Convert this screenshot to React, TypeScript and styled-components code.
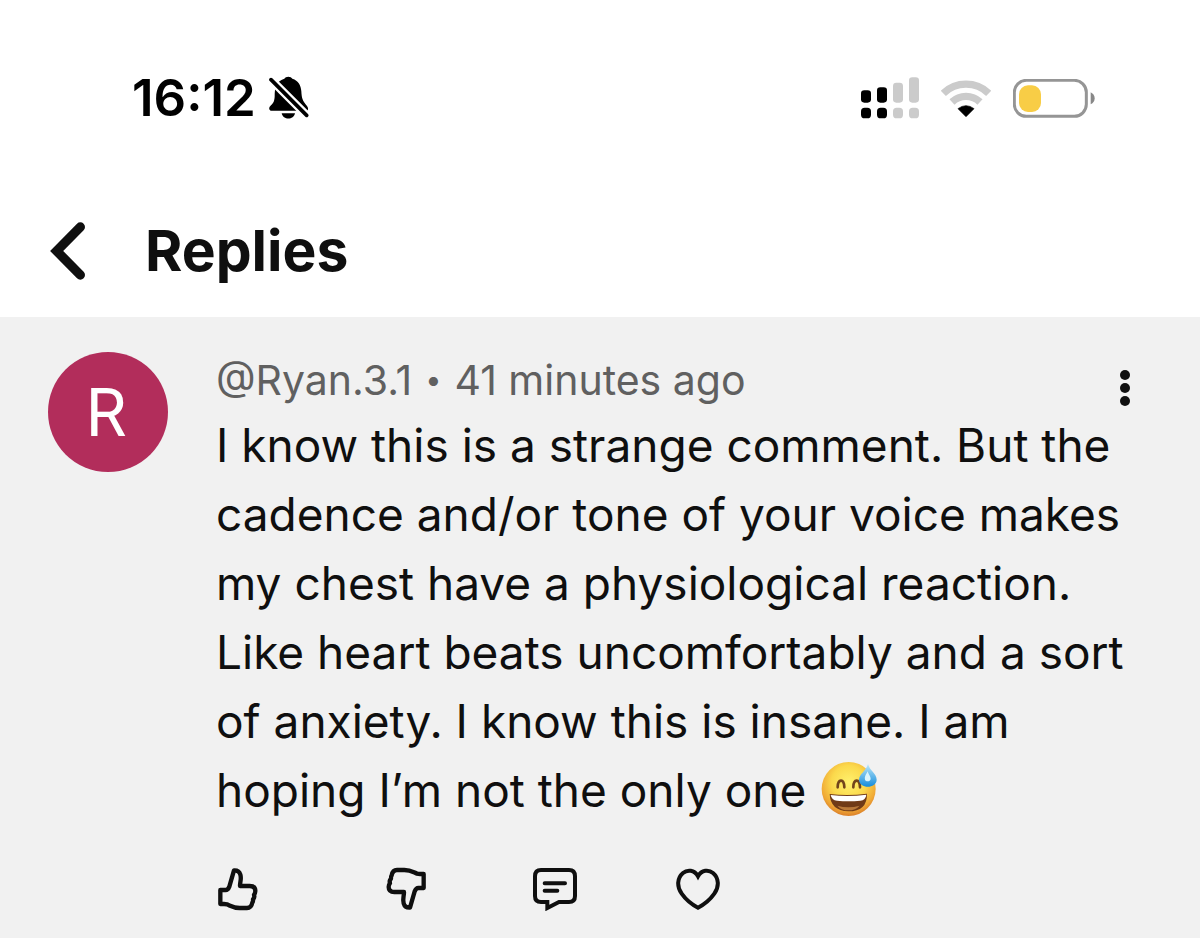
import React from "react";
import styled, { createGlobalStyle } from "styled-components";

const GlobalStyle = createGlobalStyle`
  *, *::before, *::after { box-sizing: border-box; }
  html { background: #f1f1f1; }
  body {
    margin: 0;
    background: #f1f1f1;
    color: #0f0f0f;
    font-family: Inter, "Liberation Sans", sans-serif;
  }
  svg { display: block; flex: none; }
`;

const Page = styled.div`
  display: flex;
  flex-direction: column;
  min-height: 100vh;
`;

const StatusBar = styled.div`
  display: flex;
  align-items: center;
  justify-content: space-between;
  padding: 68px 105px 0 132px;
  background: #fff;
  color: #000;
`;

const StatusGroup = styled.div<{ $gap: number }>`
  display: flex;
  align-items: center;
  gap: ${(p) => p.$gap}px;
`;

const Clock = styled.time`
  font-size: 51px;
  line-height: 60px;
  font-weight: 600;
`;

const Header = styled.header`
  display: flex;
  align-items: center;
  gap: 59px;
  padding: 87px 48px 30px 50px;
  background: #fff;
`;

const Title = styled.h1`
  margin: 0;
  font-size: 57px;
  line-height: 72px;
  font-weight: 700;
`;

const IconButton = styled.button`
  display: flex;
  align-items: center;
  justify-content: center;
  padding: 0;
  border: 0;
  background: none;
  color: inherit;
  cursor: pointer;
`;

const Comment = styled.article`
  display: flex;
  align-items: flex-start;
  gap: 48px;
  padding: 35px 69px 24px 48px;
`;

const Avatar = styled.div`
  display: flex;
  align-items: center;
  justify-content: center;
  flex: none;
  width: 120px;
  height: 120px;
  padding: 4px 4px 0 0;
  border-radius: 50%;
  background: #b22d5b;
  color: #fff;
  font: 400 66px/72px Roboto, sans-serif;
`;

const Body = styled.div`
  flex: 1;
  min-width: 0;
`;

const MetaRow = styled.div`
  display: flex;
  align-items: flex-end;
  justify-content: space-between;
  height: 59px;
  padding-bottom: 4px;
`;

const Meta = styled.div`
  display: flex;
  align-items: center;
  gap: 13px;
  color: #606060;
  font-size: 41px;
  line-height: 54px;
`;

const Bullet = styled.span`
  font-size: 29px;
`;

const Text = styled.p`
  margin: 0;
  font-size: 46px;
  line-height: 69px;

  svg {
    display: inline-block;
    vertical-align: -10px;
    margin-left: 2px;
  }
`;

const Actions = styled.div`
  display: flex;
  align-items: center;
  margin-top: 42px;
  padding-left: 1px;
`;

const Action = styled(IconButton)<{ $space?: number }>`
  width: 44px;
  height: 44px;
  margin-right: ${(p) => p.$space ?? 0}px;
`;

const BellOff = () => (
  <svg width="40" height="44" viewBox="0 0 120 132" aria-label="Silent mode">
    <path d="M46 8C50 0 66 0 70 8C88 14 96 28 97 46C98 66 100 74 114 90Q120 98 115 104H5Q-2 100 2 92C12 82 16 78 17 62C17 34 20 16 46 8Z" />
    <path d="M38 112H78C74 133 42 133 38 112Z" />
    <path d="M0 5L118 123" stroke="#fff" strokeWidth="25" />
    <path d="M6 11L113 118" stroke="#000" strokeWidth="11" strokeLinecap="round" />
  </svg>
);

const bars = [
  { x: 0, y: 40, fill: "#000" },
  { x: 48, y: 31, fill: "#000" },
  { x: 96, y: 17, fill: "#cbcbcb" },
  { x: 144, y: 1, fill: "#cbcbcb" },
];

const Signal = () => (
  <svg width="58" height="42" viewBox="0 0 174 126" aria-label="Signal">
    {bars.map((b) => (
      <g key={b.x} fill={b.fill}>
        <rect x={b.x} y={b.y} width="30" height={77 - b.y} rx="10" />
        <rect x={b.x} y="92" width="30" height="32" rx="11" />
      </g>
    ))}
  </svg>
);

const Wifi = () => (
  <svg width="50" height="37" viewBox="0 0 150 111" fill="none" aria-label="Wi-Fi">
    <g stroke="#cbcbcb" strokeWidth="22">
      <path d="M7 40A98 98 0 0 1 143 40" />
      <path d="M33 66A61 61 0 0 1 117 66" />
    </g>
    <path d="M75 110L51 86Q75 68 99 86Z" fill="#000" stroke="#000" strokeWidth="2" strokeLinejoin="round" />
  </svg>
);

const Battery = () => (
  <svg width="82" height="39" viewBox="0 0 246 117" aria-label="Battery">
    <rect x="4" y="4" width="216" height="108" rx="36" fill="none" stroke="#959595" strokeWidth="9" />
    <rect x="18" y="19" width="66" height="80" rx="27" fill="#f8cd46" />
    <path d="M233 40Q245 46 245 58T233 76Z" fill="#888" />
  </svg>
);

const Back = () => (
  <svg width="36" height="58" viewBox="0 0 108 174" fill="none" stroke="currentColor" strokeWidth="28" strokeLinecap="round">
    <path d="M91 15L20 87L91 159" />
  </svg>
);

const More = () => (
  <svg width="12" height="38" viewBox="0 0 12 38" fill="currentColor">
    <circle cx="6" cy="6" r="5" />
    <circle cx="6" cy="19" r="5" />
    <circle cx="6" cy="32" r="5" />
  </svg>
);

const ThumbShape = () => (
  <path d="M10 69H26Q33 69 37 59L51 10Q66 9 70 23C74 36 69 43 69 57H98Q115 57 115 72Q115 79 111 83Q114 91 108 97Q109 103 106 107Q103 123 90 123H68C50 123 42 117 30 112Q26 111 21 111H10Z" />
);

const Thumb = ({ down = false }: { down?: boolean }) => (
  <svg width="44" height="44" viewBox="0 0 132 132" fill="none" stroke="currentColor" strokeWidth="13" strokeLinejoin="round">
    <g transform={down ? "rotate(180 63 66)" : undefined}>
      <ThumbShape />
    </g>
  </svg>
);

const Reply = () => (
  <svg width="44" height="44" viewBox="0 0 132 132" fill="none" stroke="currentColor" strokeWidth="12" strokeLinecap="round">
    <path d="M43 105H24Q6 105 6 87V28Q6 9 24 9H108Q126 9 126 28V87Q126 105 108 105H78L43 123Z" />
    <path d="M35 49H96M35 71H73" />
  </svg>
);

const Heart = () => (
  <svg width="44" height="44" viewBox="0 0 132 132" fill="none" stroke="currentColor" strokeWidth="12">
    <path d="M66 28C55 8 34 7 21 18C3 33 2 59 17 80C29 97 46 112 66 122C86 112 103 97 115 80C130 59 129 33 111 18C98 7 77 8 66 28Z" />
  </svg>
);

const GrinningSweat = () => (
  <svg width="57" height="56" viewBox="0 0 171 168" role="img" aria-label="Grinning face with sweat">
    <defs>
      <radialGradient id="face" cx="50%" cy="38%" r="63%">
        <stop offset="0" stopColor="#fff16d" />
        <stop offset="0.5" stopColor="#fbd94c" />
        <stop offset="0.82" stopColor="#f0a936" />
        <stop offset="1" stopColor="#d97b28" />
      </radialGradient>
      <linearGradient id="drop" x1="0" y1="0" x2="0" y2="1">
        <stop offset="0" stopColor="#bde8fa" />
        <stop offset="1" stopColor="#168ddc" />
      </linearGradient>
    </defs>
    <circle cx="83" cy="84" r="81" fill="url(#face)" />
    <path d="M50 79C50 53 70 51 70 79M97 79C97 53 117 51 117 79" fill="none" stroke="#72451b" strokeWidth="8" strokeLinecap="round" />
    <path d="M26 99Q82 105 138 98Q139 151 82 151Q28 149 26 99Z" fill="#703b17" />
    <path d="M29 102Q82 108 136 101Q134 118 118 119Q82 123 48 119Q32 118 29 102Z" fill="#fff" />
    <path d="M49 134Q82 144 116 134Q104 148 82 148Q60 148 49 134Z" fill="#b8793a" />
    <path d="M141 9C134 32 115 38 114 56C115 84 166 84 167 56C167 38 146 29 141 9Z" fill="url(#drop)" />
    <path d="M140 31C134 43 130 47 132 56C135 64 148 62 149 54C149 45 143 42 140 31Z" fill="#daf4fd" />
  </svg>
);

export default function App() {
  return (
    <Page>
      <GlobalStyle />
      <StatusBar>
        <StatusGroup $gap={13}>
          <Clock>16:12</Clock>
          <BellOff />
        </StatusGroup>
        <StatusGroup $gap={22}>
          <Signal />
          <Wifi />
          <Battery />
        </StatusGroup>
      </StatusBar>
      <Header>
        <IconButton type="button" aria-label="Back">
          <Back />
        </IconButton>
        <Title>Replies</Title>
      </Header>
      <Comment>
        <Avatar>R</Avatar>
        <Body>
          <MetaRow>
            <Meta>
              <span>@Ryan.3.1</span>
              <Bullet>•</Bullet>
              <span>41 minutes ago</span>
            </Meta>
            <IconButton type="button" aria-label="More options">
              <More />
            </IconButton>
          </MetaRow>
          <Text>
            I know this is a strange comment. But the cadence and/or tone of your voice makes my chest have a
            physiological reaction. Like heart beats uncomfortably and a sort of anxiety. I know this is insane. I am
            hoping I’m not the only one <GrinningSweat />
          </Text>
          <Actions>
            <Action type="button" aria-label="Like" $space={124}>
              <Thumb />
            </Action>
            <Action type="button" aria-label="Dislike" $space={104}>
              <Thumb down />
            </Action>
            <Action type="button" aria-label="Reply" $space={99}>
              <Reply />
            </Action>
            <Action type="button" aria-label="Heart">
              <Heart />
            </Action>
          </Actions>
        </Body>
      </Comment>
    </Page>
  );
}
